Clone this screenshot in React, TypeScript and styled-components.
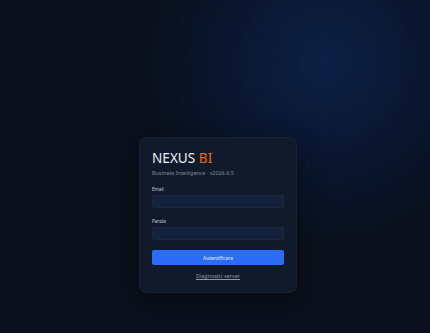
import React from "react";
import styled, { createGlobalStyle } from "styled-components";

const Global = createGlobalStyle`
  html, body { margin: 0; padding: 0; height: 100%; }
  body {
    background: #0a101c;
    font-family: "Noto Sans", "Open Sans", sans-serif;
  }
  #root { height: 100%; }
`;

const Page = styled.div`
  position: relative;
  width: 430px;
  height: 333px;
  overflow: hidden;
  box-sizing: border-box;
  display: flex;
  justify-content: center;
  align-items: flex-start;
  padding-top: 137px;
  padding-left: 6px;
  background:
    radial-gradient(circle at 325px 62px, #0d1f45 0px, #0c1b3a 45px, #0b1732 90px, #0a1325 140px, rgba(10,16,28,0) 185px),
    #0a101c;
`;

const Card = styled.div`
  width: 158px;
  height: 156px;
  box-sizing: border-box;
  padding: 12px 12px 0;
  background: #111a2a;
  border: 1px solid rgba(255, 255, 255, 0.04);
  border-radius: 8px;
  box-shadow: 0 8px 24px rgba(0, 0, 0, 0.45);
  display: flex;
  flex-direction: column;
`;

const Title = styled.h1`
  margin: 0;
  font-size: 13.6px;
  line-height: 16px;
  font-weight: 400;
  color: #e8eef6;
  letter-spacing: 0;
`;

const Accent = styled.span`
  color: #e8680f;
`;

const Subtitle = styled.div`
  margin-top: 4px;
  font-size: 5.4px;
  line-height: 7px;
  color: #7f8ba0;
`;

const Label = styled.label<{ $top: number }>`
  display: block;
  margin-top: ${(p) => p.$top}px;
  font-size: 4.6px;
  line-height: 6px;
  color: #c9d1dd;
`;

const Input = styled.div`
  flex-shrink: 0;
  margin-top: 3px;
  height: 13px;
  box-sizing: border-box;
  background: #14213a;
  border: 1px solid #1a2842;
  border-radius: 2px;
`;

const Button = styled.button`
  flex-shrink: 0;
  box-sizing: border-box;
  margin-top: 10px;
  height: 15px;
  border: none;
  border-radius: 2px;
  background: #2a6cf6;
  color: #e8efff;
  font-family: inherit;
  font-size: 5px;
  padding: 0;
`;

const Link = styled.a`
  align-self: center;
  margin-top: 7px;
  font-size: 5.4px;
  line-height: 8px;
  color: #8d97aa;
  text-decoration: underline;
`;

export default function App() {
  return (
    <>
      <Global />
      <Page>
        <Card>
          <Title>
            NEXUS <Accent>BI</Accent>
          </Title>
          <Subtitle>Business Intelligence · v2026.6.5</Subtitle>
          <Label $top={9}>Email</Label>
          <Input />
          <Label $top={10}>Parola</Label>
          <Input />
          <Button>Autentificare</Button>
          <Link>Diagnostic server</Link>
        </Card>
      </Page>
    </>
  );
}
